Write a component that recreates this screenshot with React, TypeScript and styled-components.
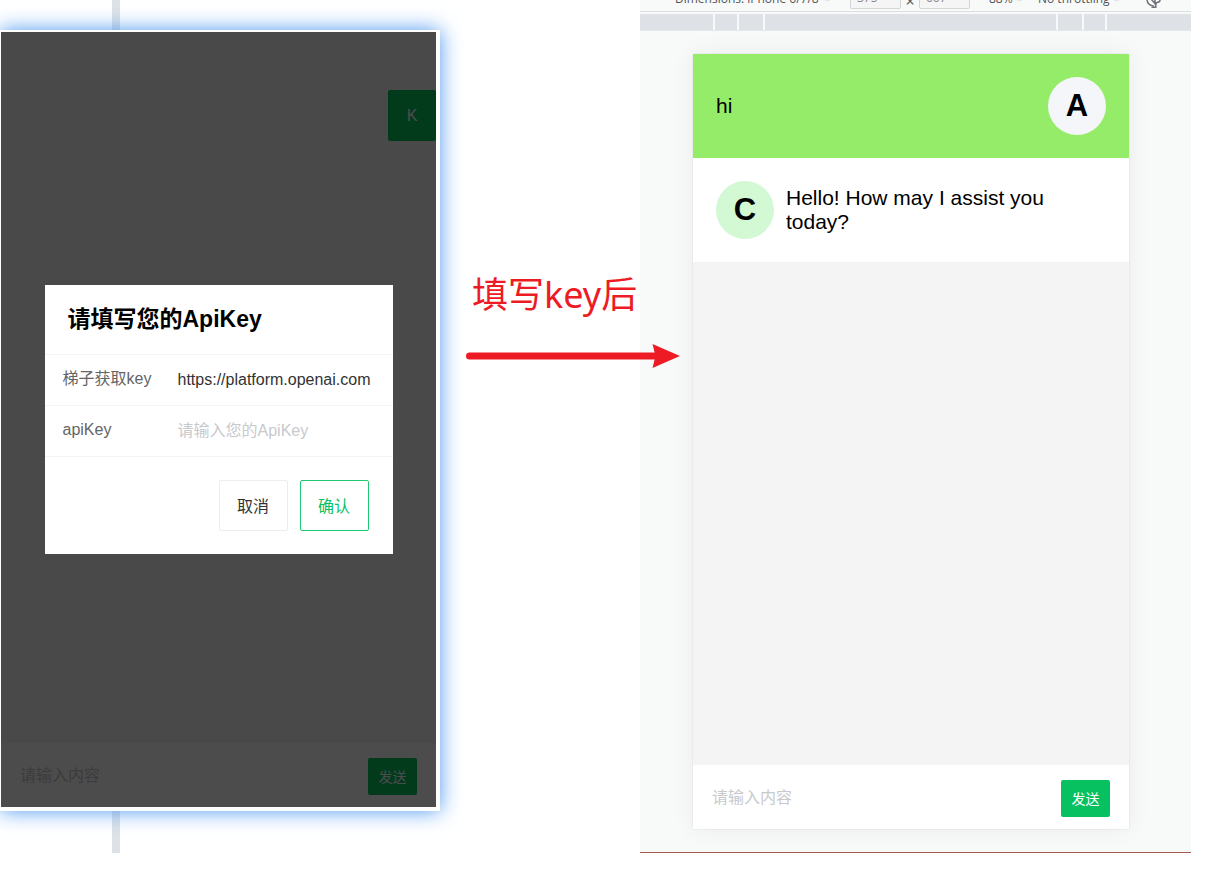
import React from "react";
import styled, { createGlobalStyle } from "styled-components";

const GlobalStyle = createGlobalStyle`
  *, *::before, *::after { box-sizing: border-box; }
  body {
    margin: 0;
    background: #fff;
    color: #000;
    font-family: "Liberation Sans", "Noto Sans CJK SC", sans-serif;
    font-size: 16px;
  }
  button, input, select { font: inherit; margin: 0; }
`;

const Page = styled.main`
  display: grid;
  grid-template-columns: minmax(0, 440fr) minmax(0, 200fr) minmax(0, 551fr) minmax(0, 29fr);
  min-height: 100vh;
  padding-bottom: 18px;
  overflow: hidden;
`;

const BeforeColumn = styled.section`
  display: flex;
  flex-direction: column;
`;

const Strip = styled.div<{ $height: number }>`
  flex: none;
  width: 8px;
  height: ${(p) => p.$height}px;
  margin-left: 112px;
  background: #dee2e6;
`;

const Frame = styled.div`
  position: relative;
  display: flex;
  flex: 1;
  border: solid #fff;
  border-width: 2px 4px 4px 1px;
  box-shadow: 0 0 20px #4c98f0;
`;

const Screen = styled.div`
  position: relative;
  display: flex;
  flex: 1;
  flex-direction: column;
  min-width: 0;
  background: #f4f4f4;
`;

const Messages = styled.div`
  flex: 1;
`;

const KeyButton = styled.button`
  display: block;
  width: 48px;
  height: 51px;
  margin: 58px 0 0 auto;
  padding: 0;
  border: 0;
  border-radius: 2px;
  background: #07c160;
  color: #fff;
`;

const Composer = styled.form`
  display: flex;
  align-items: center;
  height: 64px;
  padding: 2px 19px 0;
  background: #fff;
`;

const TextField = styled.input`
  flex: 1;
  min-width: 0;
  height: 24px;
  padding: 0;
  border: 0;
  outline: 0;
  background: transparent;
  color: #323233;
  line-height: 24px;
  &::placeholder { color: #c8c9cc; opacity: 1; }
`;

const SendButton = styled.button`
  width: 49px;
  height: 37px;
  padding: 0;
  border: 0;
  border-radius: 2px;
  background: #07c160;
  color: #fff;
  font-size: 14px;
`;

const Mask = styled.div`
  position: absolute;
  inset: 0;
  display: flex;
  align-items: center;
  justify-content: center;
  background: rgba(0, 0, 0, 0.7);
`;

const Dialog = styled.form`
  width: 80%;
  background: #fff;
`;

const DialogTitle = styled.h2`
  margin: 0;
  padding: 0 23px;
  font-size: 23px;
  line-height: 69px;
  font-weight: 700;
  border-bottom: 1px solid #f2f3f5;
`;

const Field = styled.label`
  display: flex;
  align-items: center;
  height: 51px;
  padding: 0 18px;
  border-bottom: 1px solid #f2f3f5;
  color: #646566;
`;

const FieldName = styled.span`
  flex: none;
  width: 115px;
  height: 24px;
  line-height: 22px;
`;

const Actions = styled.div`
  display: flex;
  justify-content: flex-end;
  gap: 12px;
  padding: 23px 24px 23px 23px;
`;

const ActionButton = styled.button<{ $primary?: boolean }>`
  width: 69px;
  height: 51px;
  padding: 0 0 2px;
  border: 1px solid ${(p) => (p.$primary ? "#1fc872" : "#ebedf0")};
  border-radius: 2px;
  background: #fff;
  color: ${(p) => (p.$primary ? "#07c160" : "#323233")};
`;

const Annotation = styled.aside`
  position: relative;
  z-index: 1;
  padding-top: 270px;
  color: #ed1c24;
`;

const Caption = styled.p`
  margin: 0 0 24px 32px;
  font-family: "Noto Sans", "Noto Sans CJK SC", sans-serif;
  font-size: 36px;
  line-height: 50px;
  white-space: nowrap;
`;

const Arrow = styled.svg`
  display: block;
  margin-left: 26px;
`;

const DevTools = styled.section`
  display: flex;
  flex-direction: column;
  background: #f8faf9;
  border-bottom: 1px solid #a5584c;
`;

const Toolbar = styled.div`
  display: flex;
  align-items: flex-end;
  height: 12px;
  padding-left: 35px;
  overflow: hidden;
  border-bottom: 1px solid #dcdfe0;
  color: #50555a;
  font-family: "Open Sans", sans-serif;
  font-size: 12px;
`;

const ToolSelect = styled.select<{ $width: number }>`
  flex: none;
  width: ${(p) => p.$width}px;
  height: 20px;
  margin-bottom: 2px;
  padding: 0;
  border: 0;
  appearance: none;
  background: transparent;
  color: inherit;
  line-height: 20px;
`;

const Caret = styled.span`
  flex: none;
  width: 5px;
  height: 2px;
  margin: 0 16px 10px 0;
  background: #e3e5e6;
`;

const SizeFields = styled.div`
  display: flex;
  flex: none;
  align-items: flex-end;
  margin: 0 19px 0 4px;
`;

const SizeInput = styled.input`
  flex: none;
  width: 51px;
  height: 22px;
  margin-bottom: 2px;
  padding: 0 6px 2px;
  border: 1px solid #d3d5d7;
  border-radius: 2px;
  background: #f5f5f5;
  color: #85888b;
`;

const Times = styled.span`
  flex: none;
  width: 18px;
  font-size: 16px;
  line-height: 20px;
  text-align: center;
`;

const RotateIcon = styled.svg`
  flex: none;
  margin: 0 0 3px 11px;
`;

const Ruler = styled.div`
  display: grid;
  grid-template-columns: 73fr 22fr 24fr 293fr 24fr 21fr 84fr;
  column-gap: 2px;
  height: 17px;
  margin-top: 2px;
  border-bottom: 1px solid #e6e9ec;
`;

const RulerSegment = styled.span`
  background: #dee1e6;
`;

const Stage = styled.div`
  display: flex;
  flex: 1;
  padding: 23px 62px 23px 53px;
`;

const ChatScreen = styled(Screen)`
  box-shadow: 0 0 24px rgba(0, 0, 0, 0.06), 0 0 2px rgba(0, 0, 0, 0.1);
`;

const Message = styled.div<{ $mine?: boolean }>`
  display: flex;
  flex-direction: ${(p) => (p.$mine ? "row-reverse" : "row")};
  align-items: center;
  justify-content: space-between;
  gap: 12px;
  padding: 23px;
  background: ${(p) => (p.$mine ? "#95ec69" : "#fff")};
`;

const Avatar = styled.span<{ $color: string }>`
  display: flex;
  flex: none;
  align-items: center;
  justify-content: center;
  width: 58px;
  height: 58px;
  border-radius: 50%;
  background: ${(p) => p.$color};
  font-size: 31px;
  font-weight: 700;
`;

const MessageText = styled.p`
  flex: 1;
  margin: 0;
  font-size: 21px;
  line-height: 24px;
`;

const segments = ["a", "b", "c", "d", "e", "f", "g"];

function ChatComposer() {
  return (
    <Composer onSubmit={(e) => e.preventDefault()}>
      <TextField aria-label="请输入内容" placeholder="请输入内容" />
      <SendButton type="submit">发送</SendButton>
    </Composer>
  );
}

export default function App() {
  return (
    <>
      <GlobalStyle />
      <Page>
        <BeforeColumn>
          <Strip $height={30} />
          <Frame>
            <Screen>
              <Messages>
                <KeyButton type="button">K</KeyButton>
              </Messages>
              <ChatComposer />
              <Mask>
                <Dialog onSubmit={(e) => e.preventDefault()}>
                  <DialogTitle>请填写您的ApiKey</DialogTitle>
                  <Field>
                    <FieldName>梯子获取key</FieldName>
                    <TextField readOnly value="https://platform.openai.com" />
                  </Field>
                  <Field>
                    <FieldName>apiKey</FieldName>
                    <TextField placeholder="请输入您的ApiKey" />
                  </Field>
                  <Actions>
                    <ActionButton type="button">取消</ActionButton>
                    <ActionButton type="submit" $primary>确认</ActionButton>
                  </Actions>
                </Dialog>
              </Mask>
            </Screen>
          </Frame>
          <Strip $height={42} />
        </BeforeColumn>

        <Annotation>
          <Caption>填写key后</Caption>
          <Arrow width="214" height="24" viewBox="0 0 214 24" aria-hidden="true">
            <path d="M3.5 12H192" stroke="currentColor" strokeWidth="7" strokeLinecap="round" />
            <path d="M186.500 0L214 12L186.500 24L189.500 12Z" fill="currentColor" />
          </Arrow>
        </Annotation>

        <DevTools>
          <Toolbar>
            <ToolSelect $width={150} aria-label="Device">
              <option>Dimensions: iPhone 6/7/8</option>
            </ToolSelect>
            <Caret />
            <SizeFields>
              <SizeInput aria-label="Width" defaultValue="375" />
              <Times>×</Times>
              <SizeInput aria-label="Height" defaultValue="667" />
            </SizeFields>
            <ToolSelect $width={28} aria-label="Zoom">
              <option>88%</option>
            </ToolSelect>
            <Caret />
            <ToolSelect $width={76} aria-label="Throttling">
              <option>No throttling</option>
            </ToolSelect>
            <Caret />
            <RotateIcon width="16" height="16" viewBox="0 0 16 16" fill="none" stroke="#6e7276" strokeWidth="1.5" aria-hidden="true">
              <path d="M1 7C1 10.500 3.500 13.500 8 14.200" />
              <path d="M5.500 15.200H9.800V10.500" />
              <path d="M4.500 6.500L9 11.500M9 11.500L13.500 9.500C14.500 8.500 13.500 7 12.500 6L9 2.500Z" />
            </RotateIcon>
          </Toolbar>
          <Ruler>
            {segments.map((s) => (
              <RulerSegment key={s} />
            ))}
          </Ruler>
          <Stage>
            <ChatScreen>
              <Messages>
                <Message $mine>
                  <Avatar $color="#f4f6f9">A</Avatar>
                  <MessageText>hi</MessageText>
                </Message>
                <Message>
                  <Avatar $color="#d2f8d4">C</Avatar>
                  <MessageText>Hello! How may I assist you today?</MessageText>
                </Message>
              </Messages>
              <ChatComposer />
            </ChatScreen>
          </Stage>
        </DevTools>
      </Page>
    </>
  );
}
